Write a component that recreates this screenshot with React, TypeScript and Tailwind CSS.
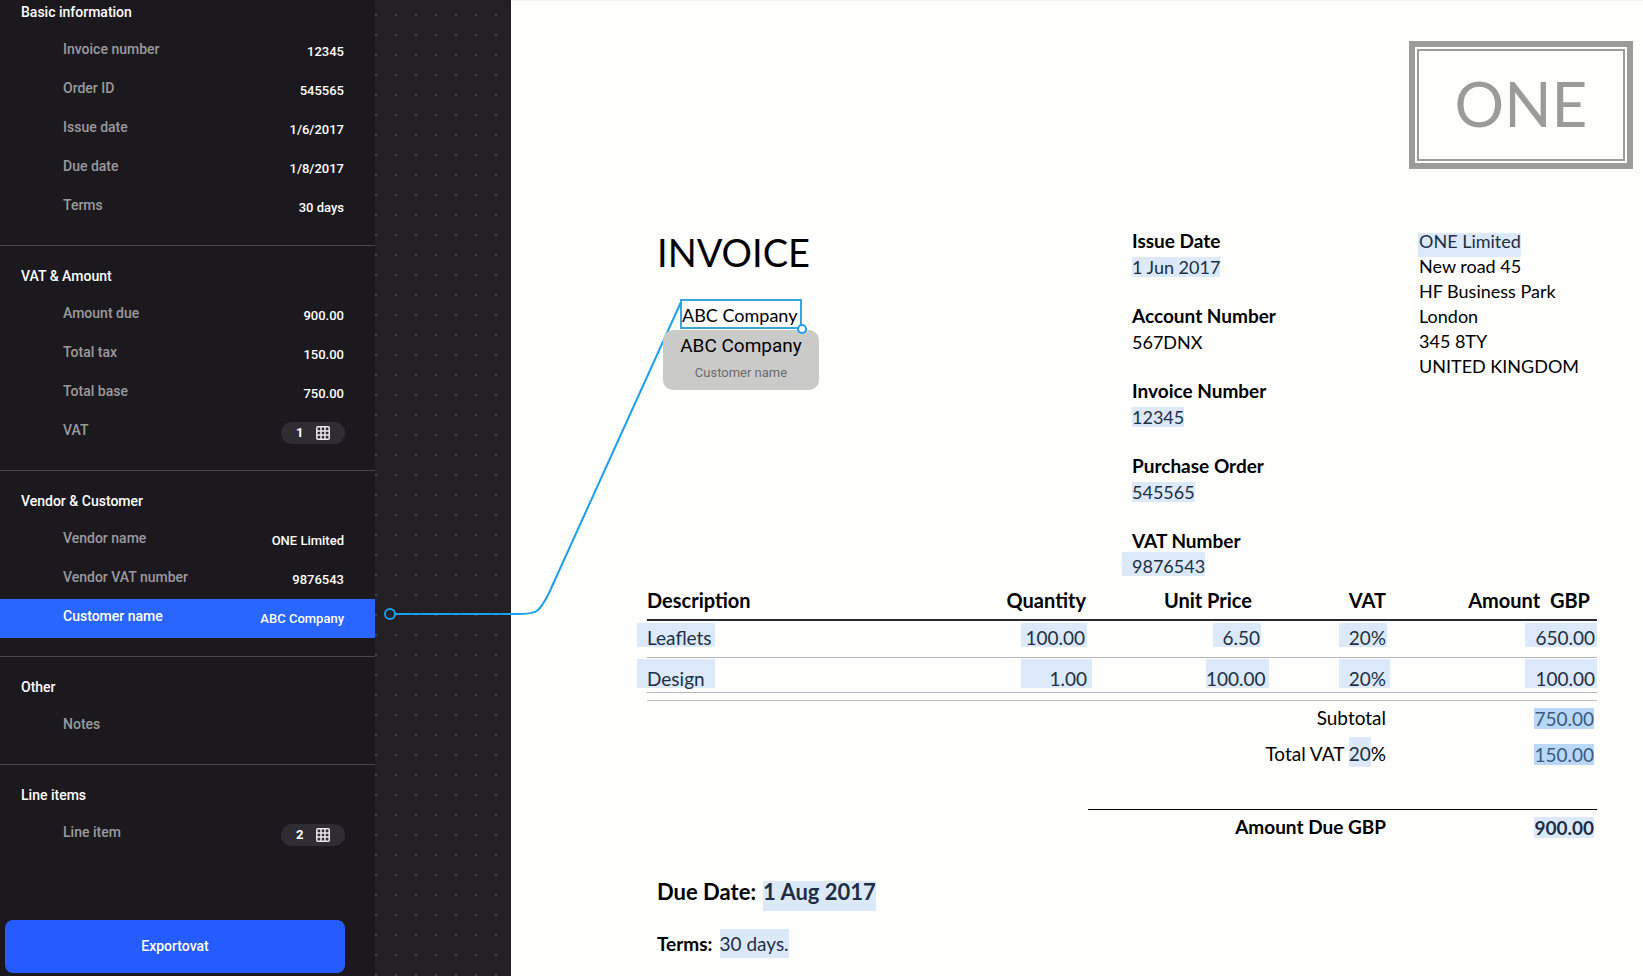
import React from "react";

type Field = { label: string; value?: string; count?: number; active?: boolean };
type Group = { title: string; fields: Field[] };

const groups: Group[] = [
  {
    title: "Basic information",
    fields: [
      { label: "Invoice number", value: "12345" },
      { label: "Order ID", value: "545565" },
      { label: "Issue date", value: "1/6/2017" },
      { label: "Due date", value: "1/8/2017" },
      { label: "Terms", value: "30 days" },
    ],
  },
  {
    title: "VAT & Amount",
    fields: [
      { label: "Amount due", value: "900.00" },
      { label: "Total tax", value: "150.00" },
      { label: "Total base", value: "750.00" },
      { label: "VAT", count: 1 },
    ],
  },
  {
    title: "Vendor & Customer",
    fields: [
      { label: "Vendor name", value: "ONE Limited" },
      { label: "Vendor VAT number", value: "9876543" },
      { label: "Customer name", value: "ABC Company", active: true },
    ],
  },
  { title: "Other", fields: [{ label: "Notes" }] },
  { title: "Line items", fields: [{ label: "Line item", count: 2 }] },
];

function GridIcon() {
  return (
    <svg viewBox="0 0 14 14" className="size-3.5" fill="none" stroke="#eceaf0" strokeWidth="1.5" aria-hidden="true">
      <rect x="0.8" y="0.8" width="12.4" height="12.4" rx="1" />
      <path d="M5 1v12M9 1v12M1 5h12M1 9h12" />
    </svg>
  );
}

function FieldRow({ field }: { field: Field }) {
  return (
    <li>
      <button
        type="button"
        className={
          field.active
            ? "flex h-[39px] w-full items-center justify-between bg-[#2965ff] pr-[31px] pl-[63px] text-left text-white"
            : "flex h-[39px] w-full items-center justify-between pr-[31px] pl-[63px] text-left text-[#9b999d]"
        }
      >
        <span className="pb-1.5 text-sm font-medium">{field.label}</span>
        {field.value && <span className="text-[13px] font-medium text-white">{field.value}</span>}
        {field.count && (
          <span className="-mr-px flex h-[22px] w-16 items-center justify-between rounded-full bg-[#2f2d33] px-[15px] text-[13px] font-bold text-white">
            {field.count}
            <GridIcon />
          </span>
        )}
      </button>
    </li>
  );
}

function Sidebar() {
  return (
    <aside className="flex w-[375px] shrink-0 flex-col bg-[#1b191e]">
      {groups.map((group, i) => (
        <section key={group.title} className={i === 0 ? "pb-[18px]" : "border-t border-[#48464b] pb-[18px]"}>
          <h2
            className={
              i === 0
                ? "pt-0.5 pb-2.5 pl-[21px] text-sm leading-5 font-medium text-white"
                : "pt-5 pb-2.5 pl-[21px] text-sm leading-5 font-medium text-white"
            }
          >
            {group.title}
          </h2>
          <ul>
            {group.fields.map((f) => (
              <FieldRow key={f.label} field={f} />
            ))}
          </ul>
        </section>
      ))}
      <button
        type="button"
        className="mt-auto mr-[30px] mb-[3px] ml-[5px] h-[53px] rounded-lg bg-[#255cff] pb-0.5 text-sm font-medium text-white"
      >
        Exportovat
      </button>
    </aside>
  );
}

function Connector() {
  return (
    <svg
      className="pointer-events-none absolute top-0 left-0 z-10 h-[625px] w-[310px]"
      viewBox="0 0 310 625"
      fill="none"
      stroke="#1c9fec"
      strokeWidth="2"
      aria-hidden="true"
    >
      <circle cx="15" cy="614" r="5" />
      <path d="M20 614H142C162 614 164 613 174 593L306 302" />
    </svg>
  );
}

type Meta = { label: string; value: string; cls: string };
const meta: Meta[] = [
  { label: "Issue Date", value: "1 Jun 2017", cls: "bg-[#dbe9fa] text-[#1e2f45]" },
  { label: "Account Number", value: "567DNX", cls: "" },
  { label: "Invoice Number", value: "12345", cls: "bg-[#dbe9fa] text-[#1e2f45]" },
  { label: "Purchase Order", value: "545565", cls: "bg-[#dbe9fa] text-[#1e2f45]" },
  { label: "VAT Number", value: "9876543", cls: "-mt-1.5 -ml-2.5 pt-1 pl-2.5 bg-[#dbe9fa] text-[#1e2f45]" },
];

function ItemCell({ text, box, tall }: { text: string; box: string; tall?: boolean }) {
  return (
    <td className={tall ? "p-0 pt-px pb-1" : "p-0 pt-0.5 pb-2.5"}>
      <div className={`bg-[#dbe9fa] leading-[18px] text-[#1e2f45] ${tall ? "pt-[11px]" : "pt-1.5"} ${box}`}>{text}</div>
    </td>
  );
}

function Invoice() {
  return (
    <article className="flex-1 border-t border-[#f8f8fb] bg-[#fefefd] pb-4 font-[Lato,sans-serif] text-lg leading-6 text-black">
      <div className="mt-10 mr-2.5 ml-auto w-56 border-[6px] border-[#9b9b99] p-0.5">
        <div className="flex h-28 items-center justify-center border-2 border-[#9b9b99] pb-1 text-[62px] leading-none text-[#9b9b99]">
          ONE
        </div>
      </div>

      <div className="mt-[60px] flex pl-[146px]">
        <div className="flex-1">
          <h1 className="text-[38px] leading-[46px]">INVOICE</h1>
          <div className="relative mt-6 ml-[23px] h-[30px] w-[122px] border-2 border-[#38a6dd] pt-0.5 whitespace-nowrap">
            ABC Company
            <span className="absolute -right-[7px] -bottom-[7px] z-30 size-2.5 rounded-full border-2 border-[#1c9fec] bg-white" />
            <div className="absolute top-[29px] left-1/2 z-20 h-[60px] w-[156px] -translate-x-1/2 rounded-[10px] bg-[#cacac9] pt-1 text-center font-[Roboto,sans-serif]">
              <p className="text-[19px] leading-6">ABC Company</p>
              <p className="mt-[5px] text-[13px] leading-5 text-[#6a6a6a]">Customer name</p>
            </div>
          </div>
        </div>
        <dl className="flex w-[287px] flex-col gap-[25px]">
          {meta.map((m) => (
            <div key={m.label}>
              <dt className="text-[19px] leading-6 font-bold">{m.label}</dt>
              <dd className="mt-0.5 flex h-6 items-center">
                <span className={`leading-5 ${m.cls}`}>{m.value}</span>
              </dd>
            </div>
          ))}
        </dl>
        <address className="w-56 leading-[25px] not-italic">
          <p className="flex h-[25px] items-start pt-1">
            <span className="-ml-px bg-[#dbe9fa] pb-2 pl-px leading-4 text-[#1e2f45]">ONE Limited</span>
          </p>
          <p>New road 45</p>
          <p>HF Business Park</p>
          <p>London</p>
          <p>345 8TY</p>
          <p>UNITED KINGDOM</p>
        </address>
      </div>

      <div className="mt-[9px] mr-[46px] ml-[136px] text-[19px] leading-6">
        <div className="border-b border-[#c4c4c6] pb-[7px]">
          <table className="w-full table-fixed border-collapse text-right">
            <colgroup>
              <col />
              <col className="w-[95px]" />
              <col className="w-[177px]" />
              <col className="w-[121px]" />
              <col className="w-[207px]" />
            </colgroup>
            <thead>
              <tr className="border-b-2 border-[#2a2a2e] text-xl leading-6">
                <th className="pb-[7px] text-left">Description</th>
                <th className="pr-1.5 pb-[7px]">Quantity</th>
                <th className="pr-[17px] pb-[7px]">Unit Price</th>
                <th className="pr-1 pb-[7px]">VAT</th>
                <th className="pr-[7px] pb-[7px] whitespace-pre">{"Amount  GBP"}</th>
              </tr>
            </thead>
            <tbody>
              <tr className="border-b border-[#b4b5bb]">
                <ItemCell text="Leaflets" box="-ml-2.5 w-[78px] pl-2.5 text-left" />
                <ItemCell text="100.00" box="mr-[5px] ml-auto w-[66px] pr-0.5" />
                <ItemCell text="6.50" box="mr-2 ml-auto w-12 pr-px" />
                <ItemCell text="20%" box="mr-[3px] ml-auto w-12 pr-px" />
                <ItemCell text="650.00" box="ml-auto w-[72px] pr-0.5" />
              </tr>
              <tr className="border-b border-[#b4b5bb]">
                <ItemCell tall text="Design" box="-ml-2.5 w-[78px] pl-2.5 text-left" />
                <ItemCell tall text="1.00" box="ml-auto w-[71px] pr-[5px]" />
                <ItemCell tall text="100.00" box="ml-auto w-[63px] pr-[5px]" />
                <ItemCell tall text="20%" box="ml-auto w-[51px] pr-1" />
                <ItemCell tall text="100.00" box="ml-auto w-[72px] pr-0.5" />
              </tr>
            </tbody>
          </table>
        </div>

        <dl className="pt-[5px] text-right">
          <div className="flex h-6 items-center justify-end">
            <dt>Subtotal</dt>
            <dd className="flex w-[211px] justify-end pr-[3px]">
              <span className="bg-[#b9d7f7] leading-[21px] text-[#3b5a80]">750.00</span>
            </dd>
          </div>
          <div className="mt-3 flex h-6 items-center justify-end">
            <dt>
              Total VAT <span className="bg-[#dbe9fa] pt-[5px] pb-0.5 text-[#1e2f45]">20</span>%
            </dt>
            <dd className="flex w-[211px] justify-end pr-[3px]">
              <span className="bg-[#b9d7f7] leading-[21px] text-[#3b5a80]">150.00</span>
            </dd>
          </div>
          <div className="mt-[43px] ml-auto flex w-[509px] items-center justify-end border-t border-black pt-[5px] font-bold">
            <dt>Amount Due GBP</dt>
            <dd className="flex w-[211px] justify-end pr-[3px]">
              <span className="bg-[#dbe9fa] leading-[21px] text-[#1e2f45]">900.00</span>
            </dd>
          </div>
        </dl>
      </div>

      <p className="mt-[42px] ml-[146px] flex gap-[7px] text-[22px] leading-[22px] font-bold">
        Due Date: <span className="bg-[#dbe9fa] pb-2 text-[#1e2f45]">1 Aug 2017</span>
      </p>
      <p className="mt-[18px] ml-[146px] flex gap-[7px] text-[19px] leading-[29px]">
        <strong>Terms:</strong> <span className="bg-[#dbe9fa] text-[#1e2f45]">30 days.</span>
      </p>
    </article>
  );
}

export default function App() {
  return (
    <div className="flex min-h-screen bg-[#232124] font-[Roboto,sans-serif]">
      <Sidebar />
      <main className="relative flex flex-1">
        <div className="w-[136px] shrink-0 bg-[radial-gradient(#454347_1px,transparent_1px)] bg-[length:20px_20px] bg-[position:11px_5px]" />
        <Connector />
        <Invoice />
      </main>
    </div>
  );
}
